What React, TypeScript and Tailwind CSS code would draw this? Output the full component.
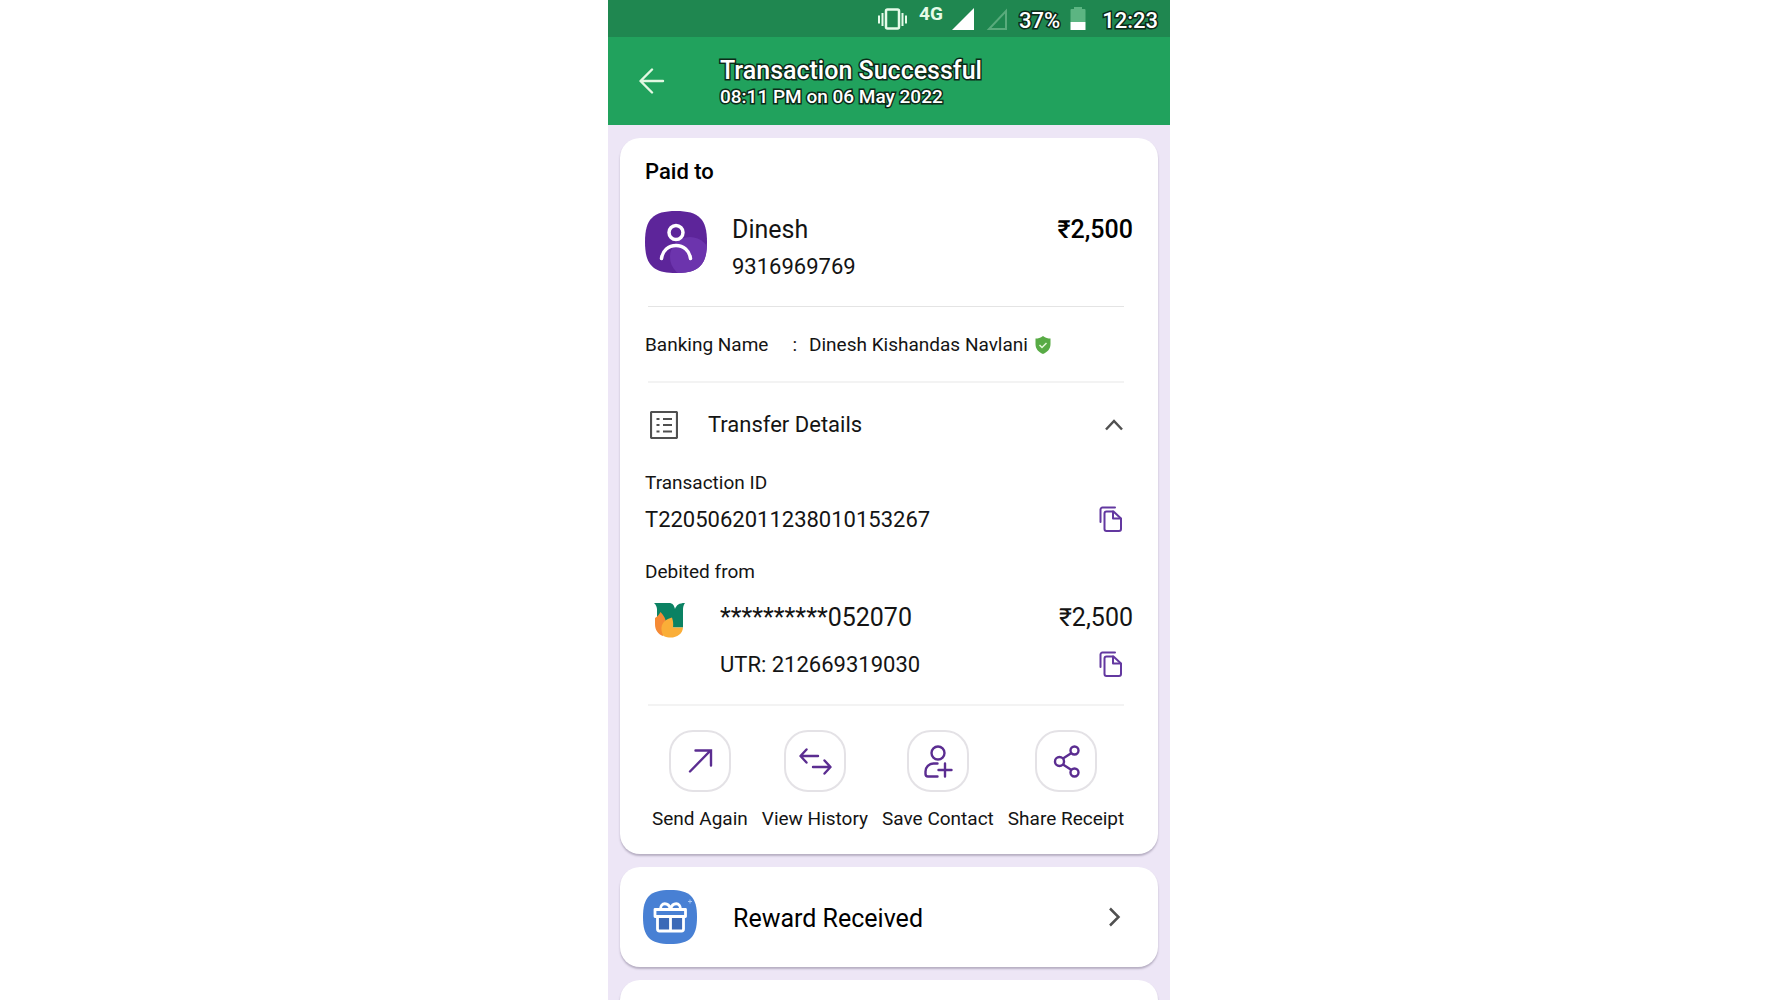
import type { ReactNode } from 'react'

const OUTLINED = 'font-medium text-white [-webkit-text-stroke:3px_#0c2a18] [paint-order:stroke_fill]'

const ACTIONS = [
  { label: 'Send Again', icon: <SendIcon /> },
  { label: 'View History', icon: <HistoryIcon /> },
  { label: 'Save Contact', icon: <ContactIcon /> },
  { label: 'Share Receipt', icon: <ShareIcon /> },
]

function SendIcon() {
  return (
    <svg viewBox="0 0 58 58" className="size-[58px]" fill="none" stroke="#5b2d91" strokeWidth="2.4" strokeLinecap="round">
      <path d="M19 39.5 39.5 18.5M24.5 18.5h15.500v15" />
    </svg>
  )
}

function HistoryIcon() {
  return (
    <svg viewBox="0 0 58 58" className="size-[58px]" fill="none" stroke="#5b2d91" strokeWidth="2.4" strokeLinecap="round" strokeLinejoin="round">
      <path d="M32 24H15M20.500 17.500 14.500 24l6 6.500M27 35h17M38.500 28.500l6 6.500-6 6.500" />
    </svg>
  )
}

function ContactIcon() {
  return (
    <svg viewBox="0 0 58 58" className="size-[58px]" fill="none" stroke="#5b2d91" strokeWidth="2.4" strokeLinecap="round">
      <circle cx="29" cy="21" r="6.500" />
      <path d="M28.500 31.500h-4c-4.500 0-8 3.500-8 8v2.500c0 1.500 1 2.500 2.500 2.500h9.500M36 31.500v13M29.500 38h13" />
    </svg>
  )
}

function ShareIcon() {
  return (
    <svg viewBox="0 0 58 58" className="size-[58px]" fill="none" stroke="#5b2d91" strokeWidth="2.4">
      <circle cx="22.500" cy="29.500" r="4.500" />
      <circle cx="37.500" cy="18.500" r="4" />
      <circle cx="37.500" cy="40.500" r="4" />
      <path d="M26 26.500 34.500 21M26 32.500l8.500 5.500" />
    </svg>
  )
}

function CopyButton({ label }: { label: string }) {
  return (
    <button type="button" aria-label={label} className="mr-2.5">
      <svg viewBox="0 0 24 26" className="h-[26px] w-6" fill="none" stroke="#6338a0" strokeWidth="2" strokeLinecap="round" strokeLinejoin="round">
        <path d="M1.500 16V3.500A2 2 0 0 1 3.500 1.500H16" />
        <path d="M7.500 5.500h7L22 12.500V23a2 2 0 0 1-2 2H7.500a2 2 0 0 1-2-2V7.500a2 2 0 0 1 2-2z" />
        <path d="M14 5.500v7h7.500" />
      </svg>
    </button>
  )
}

function BankLogo() {
  return (
    <svg viewBox="0 0 32 36" className="h-9 w-8 shrink-0">
      <path d="M0 1h15c3.500 0 5 2 6 6 1.500-4 4-6 10-6-1.500 2-2 4-2 7v17.500H19L17 17l-9 8-5-8V7C2.500 4 2 3 0 1z" fill="#0b8263" />
      <path d="M6.500 10C10 14 12 17 12 21L9 34C4 32 1 28 1 22v-6c2-1 4-3 5.500-6z" fill="#f58a35" />
      <path d="M18 15.500c-6 1.500-10 5-10.500 10-.3 3 .5 6 2 8.500 9 4 19 0 19.500-8.500H19c.5-4 0-7-1-10z" fill="#faae38" />
    </svg>
  )
}

function Card({ className = '', children }: { className?: string; children?: ReactNode }) {
  return (
    <section className={`bg-white shadow-[0_2px_2px_rgba(60,50,80,0.3)] ${className}`}>{children}</section>
  )
}

function StatusBar() {
  return (
    <div className="flex h-[37px] items-center justify-end bg-[#1f8750] pr-3 text-[22px]">
      <svg viewBox="0 0 29 22" className="h-[22px] w-[29px]" fill="none" stroke="#e6fbe9" strokeWidth="2">
        <rect x="8" y="1.500" width="13" height="19" rx="1.500" strokeWidth="2.500" />
        <path d="M1 7.500v8M4.500 5v13M24.500 5v13M28 7.500v8" />
      </svg>
      <span className="ml-3 self-start pt-1 text-[19px] leading-5 font-bold text-[#e6fbe9]">4G</span>
      <svg viewBox="0 0 24 24" className="ml-2 size-6">
        <path d="M23 1v22H1z" fill="#fff" />
      </svg>
      <svg viewBox="0 0 24 24" className="ml-2.5 size-6" fill="none" stroke="#59ab7c" strokeWidth="2">
        <path d="M21 4v18H4z" />
      </svg>
      <span className={`ml-2.5 pt-1 leading-8 ${OUTLINED}`}>37%</span>
      <svg viewBox="0 0 16 24" className="ml-2.5 h-6 w-4">
        <path d="M4 0h8v2h2.500q1 0 1 1v12H.500V3q0-1 1-1H4z" fill="#5cb582" />
        <path d="M.500 15h15v8H.500z" fill="#fff" />
      </svg>
      <span className={`ml-4 pt-1 leading-8 ${OUTLINED}`}>12:23</span>
    </div>
  )
}

function Header() {
  return (
    <header className="flex h-[88px] items-center bg-[#21a25d] pl-[31px]">
      <button type="button" aria-label="Back">
        <svg viewBox="0 0 26 26" className="size-[26px]" fill="none" stroke="#e2f8e2" strokeWidth="2.4" strokeLinecap="round" strokeLinejoin="round">
          <path d="M24 13H2M13 1.500 1.500 13 13 24.500" />
        </svg>
      </button>
      <div className={`ml-[55px] pt-[3px] ${OUTLINED}`}>
        <h1 className="text-[25px] leading-7">Transaction Successful</h1>
        <p className="text-[19px] leading-[23px]">08:11 PM on 06 May 2022</p>
      </div>
    </header>
  )
}

export default function App() {
  return (
    <div className="h-screen overflow-hidden bg-white font-['Roboto',sans-serif] text-[#141414]">
      <div className="mx-auto flex h-full max-w-[562px] flex-col bg-[#ede6f6]">
        <StatusBar />
        <Header />
        <main className="flex grow flex-col gap-[13px] px-3 pt-[13px]">
          <Card className="rounded-[20px] px-[25px] pt-5 pb-[23px]">
            <h2 className="text-[22px] leading-7 font-medium text-black">Paid to</h2>
            <div className="mt-[25px] flex">
              <svg viewBox="0 0 62 62" className="size-[62px] shrink-0">
                <clipPath id="avatar">
                  <path d="M31 0C54 0 62 8 62 31S54 62 31 62 0 54 0 31 8 0 31 0z" />
                </clipPath>
                <g clipPath="url(#avatar)">
                  <rect width="62" height="62" fill="#5d259a" />
                  <circle cx="45" cy="46" r="20" fill="#6c34ad" />
                </g>
                <g fill="none" stroke="#fff" strokeWidth="3.500" strokeLinecap="round">
                  <circle cx="31" cy="21.500" r="7" />
                  <path d="M16.500 47.500c1-8 7-13 14.500-13s13.500 5 14.500 13" />
                </g>
              </svg>
              <div className="ml-[25px] grow leading-[37px]">
                <div className="flex justify-between text-[25px]">
                  <span>Dinesh</span>
                  <span className="font-medium text-black">₹2,500</span>
                </div>
                <p className="text-[22px] leading-[38px]">9316969769</p>
              </div>
            </div>

            <hr className="mt-5 mr-[9px] ml-[3px] border-[#e4e4e4]" />
            <div className="mt-[26px] flex items-center text-[19px] leading-6">
              <span>Banking Name</span>
              <span className="ml-6">:</span>
              <span className="ml-3">Dinesh Kishandas Navlani</span>
              <svg viewBox="0 0 16 18" className="ml-[7px] h-[18px] w-4">
                <path d="M8 0c2.500 2 5 2.500 7.500 2.500V8c0 5-3 8-7.500 10C3.500 16 .500 13 .500 8V2.500C3 2.500 5.500 2 8 0z" fill="#58ab45" />
                <path d="m4.500 9 2.500 2.500L11.500 7" fill="none" stroke="#e4f8d8" strokeWidth="1.500" />
              </svg>
            </div>
            <hr className="mt-6 mr-[9px] ml-[3px] border-t-2 border-[#f3f3f3]" />

            <button type="button" aria-expanded="true" className="mt-7 flex w-full items-center pl-[5px] text-left text-[22px] leading-7">
              <svg viewBox="0 0 28 28" className="size-7" fill="none" stroke="#505050" strokeWidth="2">
                <rect x="1" y="1" width="26" height="26" rx="1" strokeWidth="2.200" />
                <path d="M6.500 8h3M6.500 14h3M6.500 20.500h3M13 8h9M13 14h9M13 20.500h9" />
              </svg>
              <span className="ml-[30px] grow">Transfer Details</span>
              <svg viewBox="0 0 20 20" className="mr-[9px] size-5" fill="none" stroke="#505050" strokeWidth="2.500">
                <path d="m2 14.500 8-8.500 8 8.500" />
              </svg>
            </button>
            <h3 className="mt-8 text-[19px] leading-6">Transaction ID</h3>
            <div className="mt-2.5 flex h-7 items-center justify-between text-[22px] leading-7">
              <span className="pt-px">T2205062011238010153267</span>
              <CopyButton label="Copy transaction ID" />
            </div>
            <h3 className="mt-[27px] text-[19px] leading-6">Debited from</h3>
            <div className="mt-[18px] flex pl-[9px]">
              <BankLogo />
              <div className="ml-[34px] grow">
                <div className="flex justify-between text-[25px] leading-8">
                  <span>**********052070</span>
                  <span>₹2,500</span>
                </div>
                <div className="mt-4 flex h-7 items-center justify-between text-[22px] leading-7">
                  <span className="pt-px">UTR: 212669319030</span>
                  <CopyButton label="Copy UTR" />
                </div>
              </div>
            </div>

            <hr className="mt-[26px] mr-[9px] ml-[3px] border-t-2 border-[#f3f3f3]" />
            <div className="mt-6 flex gap-3.5 pl-[7px] text-[19px] leading-6 whitespace-nowrap">
              {ACTIONS.map((action) => (
                <button key={action.label} type="button" className="flex flex-col items-center gap-[15px]">
                  <span className="rounded-[24px] border-2 border-[#e4e2e6]">{action.icon}</span>
                  {action.label}
                </button>
              ))}
            </div>
          </Card>

          <Card className="rounded-[20px]">
            <button type="button" className="flex h-[100px] w-full items-center pl-[23px] text-left text-[25px] text-black">
              <svg viewBox="0 0 54 54" className="size-[54px]">
                <path d="M27 0C47 0 54 7 54 27S47 54 27 54 0 47 0 27 7 0 27 0z" fill="#4880d4" />
                <path d="M14 27h26v14H14z" fill="#3b69b7" />
                <g fill="none" stroke="#fff" strokeWidth="2.800" strokeLinejoin="round">
                  <path d="M12 19.500h30.500v7H12zM14.500 27v12q0 2 2 2h22q2 0 2-2V27M27.500 27v14" />
                  <path d="M17.500 19c0-7 8-7 10 0 2-7 10-7 10 0" />
                </g>
                <path d="M47 9.500v4M45 11.500h4" stroke="#a9caf5" />
              </svg>
              <span className="ml-9 grow pt-1">Reward Received</span>
              <svg viewBox="0 0 20 20" className="mr-[34px] size-5" fill="none" stroke="#505050" strokeWidth="2.500">
                <path d="m6 1.500 8.500 8.500L6 18.500" />
              </svg>
            </button>
          </Card>

          <Card className="grow rounded-t-[20px]" />
        </main>
      </div>
    </div>
  )
}
